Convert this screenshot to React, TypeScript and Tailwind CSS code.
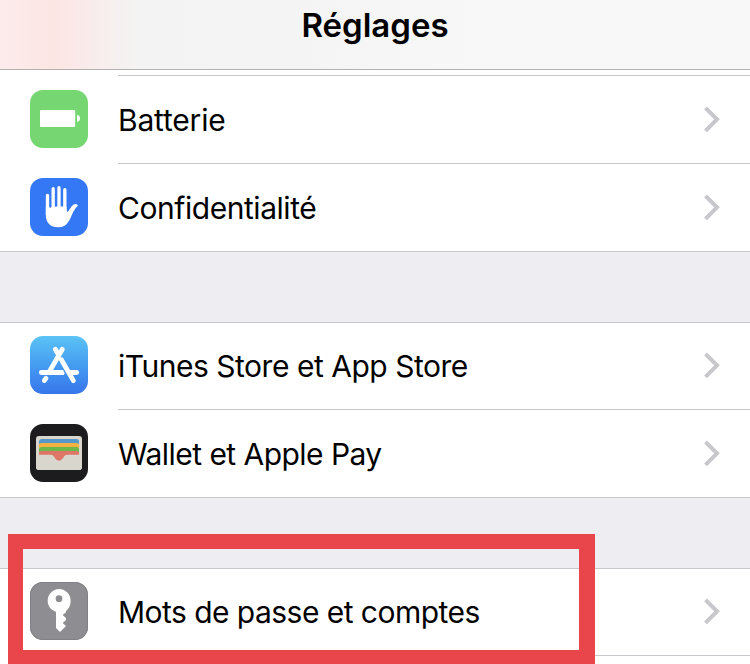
import type { ReactNode } from "react";

function IconTile({ className, children }: { className: string; children: ReactNode }) {
  return (
    <div className={`h-[58px] w-[58px] shrink-0 overflow-hidden rounded-[13px] ${className}`}>
      <svg viewBox="30 30 174 174" className="block h-full w-full">
        {children}
      </svg>
    </div>
  );
}

function BatteryIcon() {
  return (
    <IconTile className="bg-[#76d672]">
      <rect x="60" y="90" width="105.500" height="51" rx="3" fill="#fff" />
      <path d="M171 104 C183 106 183 124 171 126 Z" fill="#fff" />
    </IconTile>
  );
}

function HandIcon() {
  return (
    <IconTile className="bg-[#3478f6]">
      <g fill="none" stroke="#fff" strokeWidth="10" strokeLinecap="round">
        <path d="M82.500 82V140M99.500 62V135M117 59V135M134.500 65V135" />
      </g>
      <path
        fill="#fff"
        d="M77.500 117 L87 117 Q91 121 95 117 L103 117 Q108 114 113 116 L121 116 Q126 113 130.500 117 L139.500 117 L140 130 Q142 133 146 128 L155 115 Q161 107 168 108 Q175 109 173 114 Q166 119 160 131 C150 151 145 178 114 178 C91 178 77.500 164 77.500 142Z"
      />
    </IconTile>
  );
}

function AppStoreIcon() {
  return (
    <IconTile className="bg-linear-to-b from-[#5bc3f5] to-[#3774eb]">
      <g fill="none" stroke="#fff" strokeWidth="14.500" strokeLinecap="round">
        <path d="M106 70L112 80M124 101L160 164" />
        <path d="M64 139.500H124M152 139.500H170" />
        <path d="M73 163.500L78 157" />
        <path d="M127 70L88 137" />
      </g>
      <path d="M126 132H129L134 141L132 147H126Z" fill="#fff" />
    </IconTile>
  );
}

function WalletIcon() {
  return (
    <IconTile className="bg-[#1c1c1e]">
      <rect x="48" y="66" width="138" height="102" rx="9" fill="#d9d6cd" />
      <path d="M57 90V83Q57 75 65 75H169Q177 75 177 83V90Z" fill="#5499c9" />
      <path d="M57 103V94Q57 87 65 87H169Q177 87 177 94V103Z" fill="#f3b13f" />
      <path d="M57 115V106Q57 99 65 99H169Q177 99 177 106V115Z" fill="#6fb64b" />
      <path d="M57 124V118Q57 111 65 111H169Q177 111 177 118V124Z" fill="#df7567" />
      <path d="M48 122H186V159Q186 168 177 168H57Q48 168 48 159Z" fill="#d9d6cd" />
      <path d="M86 121C108 122 101 139 117 140C133 139 126 122 148 121Z" fill="#df7567" />
    </IconTile>
  );
}

function KeyIcon() {
  return (
    <IconTile className="bg-[#8e8d92] ring-1 ring-[#828186] ring-inset">
      <path
        fill="#fff"
        fillRule="evenodd"
        d="M117.500 51A35 35 0 0 0 83 86C83 102 93 114 108 119V168L120 180L138 162L128 153L138 144V138L128 129L138 121V117C146 111 152 100 152 86A35 35 0 0 0 117.500 51ZM117 70A10 10 0 1 1 117 90A10 10 0 1 1 117 70Z"
      />
    </IconTile>
  );
}

interface RowProps {
  icon: ReactNode;
  label: string;
  tracking: string;
  first?: boolean;
  last?: boolean;
}

function Row({ icon, label, tracking, first, last }: RowProps) {
  return (
    <div className={`flex pl-[30px] ${first ? "h-[87px]" : "h-[88px]"} ${last ? "border-b border-[#c8c7cc]" : ""}`}>
      <div className={first ? "pt-[13px]" : "pt-[14px]"}>{icon}</div>
      <div
        className={`ml-[30px] flex flex-1 justify-between pr-[30px] ${last ? "" : "border-b border-[#c8c7cc]"} ${first ? "pt-[13px]" : "pt-[14px]"}`}
      >
        <span className={`mt-[10px] text-[30px] leading-[40px] whitespace-nowrap ${tracking}`}>{label}</span>
        <svg viewBox="0 0 18 28" className="mt-[15px] h-[28px] w-[18px]" fill="none" stroke="#c7c7cc" strokeWidth="4">
          <path d="M3.500 2.800L15 14.300L3.500 25.800" />
        </svg>
      </div>
    </div>
  );
}

export default function App() {
  return (
    <div className="relative h-[664px] w-[750px] overflow-hidden bg-white font-['Inter','Liberation_Sans',sans-serif] text-black">
      <header className="flex h-[70px] justify-center border-b border-[#b2b2b2] bg-[linear-gradient(90deg,#fdebeb_0px,#fce8e7_30px,#fce6e4_55px,#fae9e8_75px,#f6efee_110px,#f4f3f3_140px,#f4f4f4_280px,#f8f8f8_480px,#f8f8f8_750px)]">
        <h1 className="pt-[5px] text-[33px] leading-[40px] font-semibold tracking-[0px]">Réglages</h1>
      </header>
      <div className="ml-[118px] h-[6px] border-b border-[#c8c7cc]" />
      <Row icon={<BatteryIcon />} label="Batterie" tracking="tracking-[-0.2px]" />
      <Row icon={<HandIcon />} label="Confidentialité" tracking="tracking-[-0.45px]" last />
      <div className="h-[71px] border-b border-[#c8c7cc] bg-[#eeedf2]" />
      <Row icon={<AppStoreIcon />} label="iTunes Store et App Store" tracking="tracking-[-0.48px]" first />
      <Row icon={<WalletIcon />} label="Wallet et Apple Pay" tracking="tracking-[-0.54px]" last />
      <div className="h-[71px] border-b border-[#c8c7cc] bg-[#eeedf2]" />
      <Row icon={<KeyIcon />} label="Mots de passe et comptes" tracking="tracking-[-0.54px]" first />
      <div className="absolute top-[534px] left-[8px] h-[131px] w-[587px] border-[15px] border-r-[16px] border-[#e9464b]" />
    </div>
  );
}
